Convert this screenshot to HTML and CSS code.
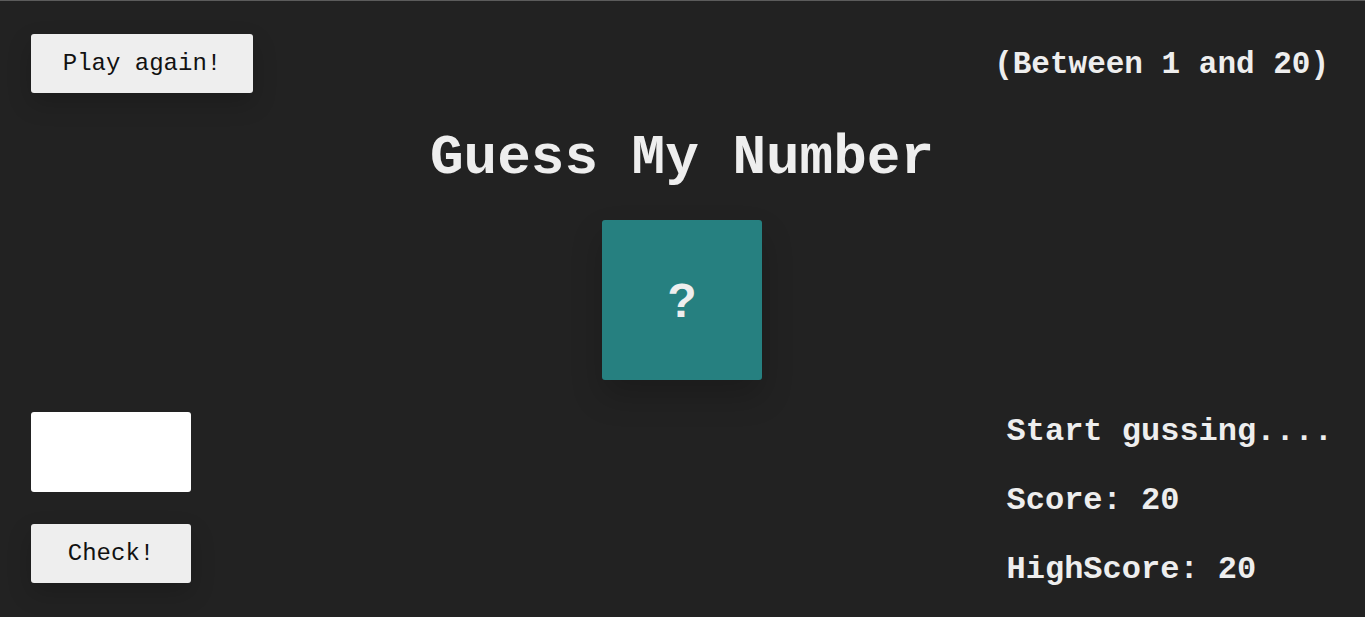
FILE: index.html
```html
<!DOCTYPE html>
<html lang="en">
<head>
<meta charset="utf-8">
<title>Guess My Number</title>
<link rel="stylesheet" href="styles.css">
</head>
<body>
  <header class="top">
    <button class="btn btn-again">Play again!</button>
    <p class="between">(Between 1 and 20)</p>
  </header>
  <h1 class="title">Guess My Number</h1>
  <div class="number">?</div>
  <main class="bottom">
    <section class="left">
      <input class="guess" type="number">
      <button class="btn btn-check">Check!</button>
    </section>
    <section class="right">
      <p class="line">Start gussing....</p>
      <p class="line">Score: 20</p>
      <p class="line">HighScore: 20</p>
    </section>
  </main>
</body>
</html>
```

FILE: styles.css
```css
* {
  box-sizing: border-box;
}

html, body {
  margin: 0;
  padding: 0;
}

body {
  height: 617px;
  overflow: hidden;
  background: #222;
  color: #eee;
  font-family: "Liberation Mono", "Courier New", monospace;
  font-weight: 700;
  border-top: 1px solid #5c5c5c;
  padding: 33px 32px 0 31px;
}

.top {
  display: flex;
  justify-content: space-between;
  align-items: center;
  height: 59px;
}

.btn {
  border: none;
  border-radius: 3px;
  background: #eee;
  color: #111;
  font-family: "Liberation Mono", "Courier New", monospace;
  font-weight: 400;
  font-size: 24px;
  height: 59px;
  padding: 0;
  box-shadow: 0 10px 24px rgba(0, 0, 0, 0.18);
}

.btn-again {
  width: 222px;
}

.btn-check {
  width: 160px;
}

.between {
  margin: 2px 4px 0 0;
  font-size: 31px;
  line-height: 36px;
}

.title {
  margin: 37px 0 0;
  text-align: center;
  font-size: 56px;
  line-height: 56px;
  font-weight: 700;
}

.number {
  margin: 34px auto 0;
  width: 160px;
  height: 160px;
  background: #268080;
  border-radius: 3px;
  display: flex;
  align-items: center;
  justify-content: center;
  font-family: "Liberation Sans", Arial, sans-serif;
  font-size: 48px;
  font-weight: 700;
  color: #eee;
  box-shadow: 0 16px 32px rgba(0, 0, 0, 0.2);
}

.bottom {
  margin-top: 32px;
  display: flex;
  justify-content: space-between;
  align-items: flex-start;
}

.left {
  display: flex;
  flex-direction: column;
  gap: 32px;
}

.guess {
  width: 160px;
  height: 80px;
  border: none;
  border-radius: 3px;
  background: #fff;
  padding: 0 10px;
  font-size: 32px;
  font-family: "Liberation Mono", monospace;
}

.right {
  display: flex;
  flex-direction: column;
  gap: 33px;
  padding-top: 2px;
}

.line {
  margin: 0;
  font-size: 32px;
  line-height: 36px;
}
```
